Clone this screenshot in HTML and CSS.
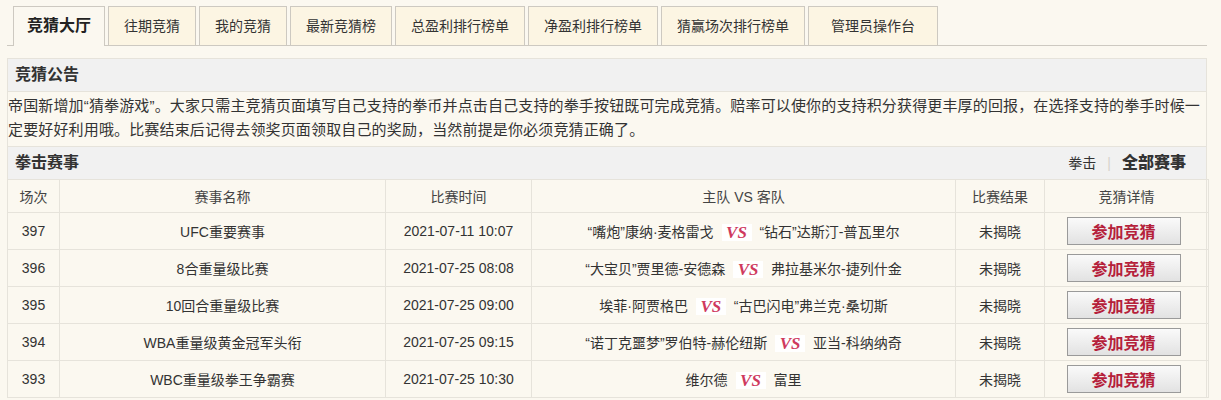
FILE: index.html
```html
<!DOCTYPE html>
<html lang="zh-CN">
<head>
<meta charset="utf-8">
<title>竞猜大厅</title>
<link rel="stylesheet" href="styles.css">
</head>
<body>
<div class="wrap">
  <div class="tabs">
    <a class="tab active">竞猜大厅</a>
    <a class="tab">往期竞猜</a>
    <a class="tab">我的竞猜</a>
    <a class="tab">最新竞猜榜</a>
    <a class="tab">总盈利排行榜单</a>
    <a class="tab">净盈利排行榜单</a>
    <a class="tab">猜赢场次排行榜单</a>
    <a class="tab wide">管理员操作台</a>
  </div>
  <div class="panel">
    <div class="hd">竞猜公告</div>
    <div class="notice">帝国新增加“猜拳游戏”。大家只需主竞猜页面填写自己支持的拳币并点击自己支持的拳手按钮既可完成竞猜。赔率可以使你的支持积分获得更丰厚的回报，在选择支持的拳手时候一定要好好利用哦。比赛结束后记得去领奖页面领取自己的奖励，当然前提是你必须竞猜正确了。</div>
    <div class="hd hd2">
      <span>拳击赛事</span>
      <span class="filter"><span class="f">拳击</span><span class="sep">|</span><b class="f">全部赛事</b></span>
    </div>
    <table class="list">
      <colgroup>
        <col class="c1"><col class="c2"><col class="c3"><col class="c4"><col class="c5"><col class="c6">
      </colgroup>
      <thead>
        <tr><th>场次</th><th>赛事名称</th><th>比赛时间</th><th>主队 VS 客队</th><th>比赛结果</th><th>竞猜详情</th></tr>
      </thead>
      <tbody>
        <tr><td>397</td><td>UFC重要赛事</td><td>2021-07-11 10:07</td><td>“嘴炮”康纳·麦格雷戈 <span class="vs">VS</span> “钻石”达斯汀-普瓦里尔</td><td>未揭晓</td><td><button class="btn">参加竞猜</button></td></tr>
        <tr><td>396</td><td>8合重量级比赛</td><td>2021-07-25 08:08</td><td>“大宝贝”贾里德-安德森 <span class="vs">VS</span> 弗拉基米尔-捷列什金</td><td>未揭晓</td><td><button class="btn">参加竞猜</button></td></tr>
        <tr><td>395</td><td>10回合重量级比赛</td><td>2021-07-25 09:00</td><td>埃菲·阿贾格巴 <span class="vs">VS</span> “古巴闪电”弗兰克·桑切斯</td><td>未揭晓</td><td><button class="btn">参加竞猜</button></td></tr>
        <tr><td>394</td><td>WBA重量级黄金冠军头衔</td><td>2021-07-25 09:15</td><td>“诺丁克噩梦”罗伯特-赫伦纽斯 <span class="vs">VS</span> 亚当-科纳纳奇</td><td>未揭晓</td><td><button class="btn">参加竞猜</button></td></tr>
        <tr><td>393</td><td>WBC重量级拳王争霸赛</td><td>2021-07-25 10:30</td><td>维尔德 <span class="vs">VS</span> 富里</td><td>未揭晓</td><td><button class="btn">参加竞猜</button></td></tr>
      </tbody>
    </table>
  </div>
</div>
</body>
</html>
```

FILE: styles.css
```css
html, body {
  margin: 0;
  padding: 0;
  background: #fbf8f0;
}
body {
  font-family: "Liberation Sans", "Noto Sans CJK SC", sans-serif;
  font-size: 14px;
  color: #333;
}
.wrap {
  width: 1200px;
  margin-left: 7px;
}
.tabs {
  display: flex;
  gap: 3px;
  padding: 6px 0 0 6px;
  border-bottom: 1px solid #cdc9c1;
  height: 39px;
}
.tab {
  display: block;
  height: 38px;
  line-height: 38px;
  padding: 0 15px;
  border: 1px solid #cdc9c1;
  border-bottom: none;
  background: #fcf5e3;
  color: #333;
  font-size: 14px;
  white-space: nowrap;
}
.tab.wide {
  padding: 0 22px;
}
.tab.active {
  background: #fbf8f0;
  font-weight: bold;
  font-size: 16px;
  padding: 0 13px;
  height: 39px;
  color: #222;
}
.panel {
  margin-top: 12px;
  border: 1px solid #e6e3db;
  border-bottom: none;
}
.hd {
  height: 32px;
  line-height: 32px;
  background: #f1f1f1;
  border-bottom: 1px solid #e6e3db;
  padding-left: 7px;
  font-weight: bold;
  font-size: 16px;
  color: #333;
}
.notice {
  padding: 2px 0 4px 0;
  line-height: 24px;
  font-size: 15px;
  letter-spacing: 0.15px;
  border-bottom: 1px solid #e6e3db;
  color: #333;
}
.hd2 {
  display: flex;
  justify-content: space-between;
  padding-right: 20px;
  border-bottom: none;
}
.filter {
  display: flex;
  align-items: center;
  gap: 11px;
}
.filter span.f {
  font-weight: normal;
  font-size: 14px;
}
.sep {
  color: #d6d3cc;
  font-weight: normal;
  font-size: 14px;
}
.list {
  width: 1201px;
  margin-left: -1px;
  border-collapse: collapse;
  table-layout: fixed;
}
.c1 { width: 52px; }
.c2 { width: 326px; }
.c3 { width: 146px; }
.c4 { width: 424px; }
.c5 { width: 89px; }
.c6 { width: 164px; }
.list th, .list td {
  border: 1px solid #e6e3db;
  text-align: center;
  padding: 0;
  white-space: nowrap;
}
.list th {
  height: 32px;
  font-weight: normal;
  color: #444;
}
.list td {
  height: 36px;
  color: #333;
}
.vs {
  display: inline-block;
  background: #fff;
  color: #cf3a5e;
  font-family: "Liberation Serif", serif;
  font-style: italic;
  font-weight: bold;
  font-size: 17px;
  line-height: 17px;
  width: 30px;
  margin: 0 4px;
  vertical-align: middle;
}
.btn {
  width: 114px;
  height: 28px;
  border: 1px solid #9a9a9a;
  background: linear-gradient(#fafafa, #e2e2e2);
  color: #b5203a;
  font-family: "Liberation Sans", "Noto Sans CJK SC", sans-serif;
  font-weight: bold;
  font-size: 16px;
  padding: 0;
  margin-right: 6px;
  cursor: pointer;
}
```
